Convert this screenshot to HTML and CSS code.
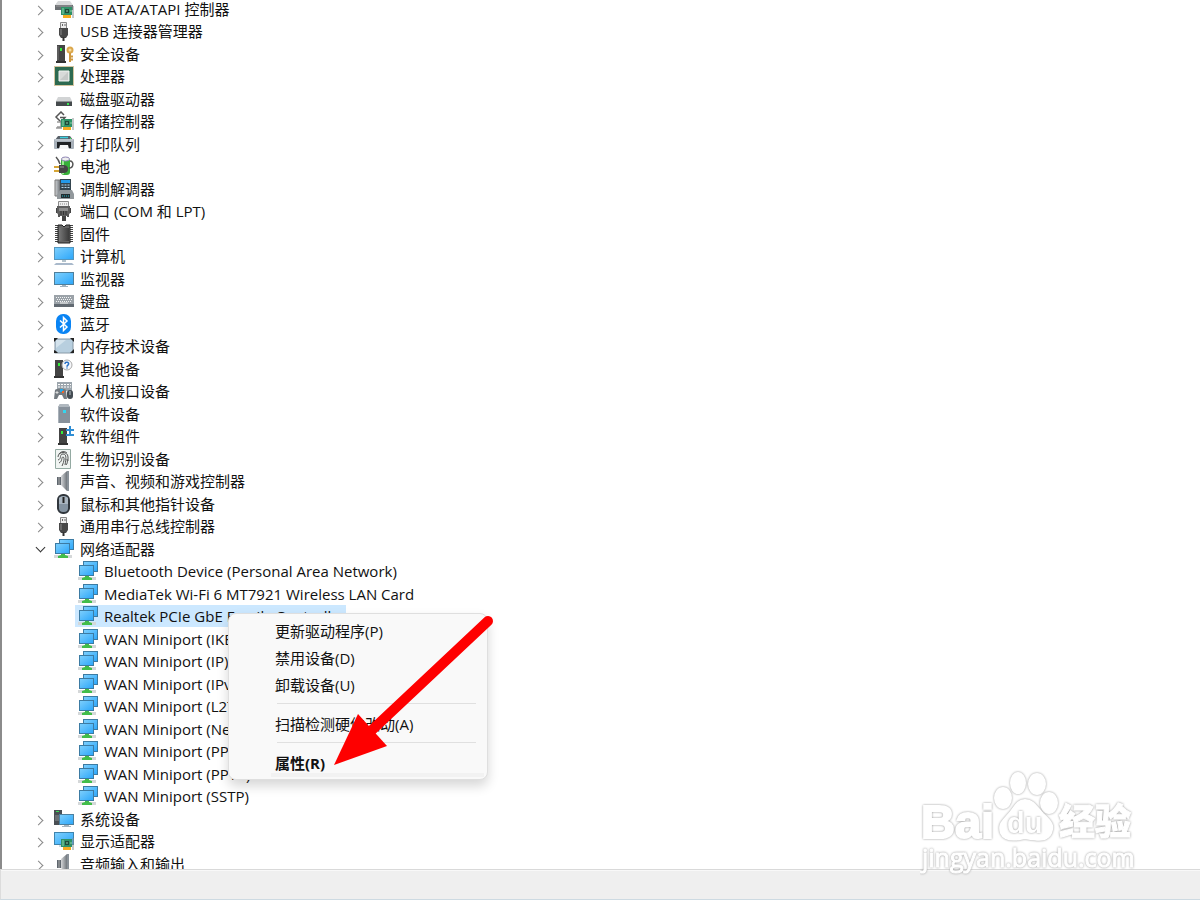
FILE: index.html
```
<!DOCTYPE html>
<html lang="zh-CN">
<head>
  <meta charset="UTF-8">
  <meta name="viewport" content="width=device-width, initial-scale=1.0">
  <title>设备管理器</title>
  <link rel="stylesheet" href="styles.css">
</head>
<body>
  <!-- iconos -->
  <svg class="sprites" aria-hidden="true">
    <defs>
      <linearGradient id="blue" x1="0" y1="0" x2="1" y2="1">
        <stop offset="0" stop-color="#7fd0fd"/><stop offset="1" stop-color="#2ba6fa"/>
      </linearGradient>
      <linearGradient id="grey" x1="0" y1="0" x2="1" y2="0">
        <stop offset="0" stop-color="#d4d6d8"/><stop offset="1" stop-color="#70767c"/>
      </linearGradient>
      <linearGradient id="dark" x1="0" y1="0" x2="1" y2="0">
        <stop offset="0" stop-color="#777"/><stop offset="1" stop-color="#3c3c3c"/>
      </linearGradient>
    </defs>

    <symbol id="card" viewBox="0 0 13 12">
      <path d="M0 1h11v8H0z" fill="#2f9168"/>
      <path d="M4 3h4v4H4z" fill="#1f4a38"/>
      <path d="M1 3h2M1 5h2M9 5h2M5 5h2M1 7h2" stroke="#8ed3a8"/>
      <path d="M2 9h8v3H2z" fill="#f4ab1f"/>
      <path d="M12 0v12" stroke="#8a9294"/>
    </symbol>
    <symbol id="ide" viewBox="0 0 20 20">
      <path d="M4 2h12l3 4H1z" fill="#d7d9da"/>
      <path d="M1 6h18v5H1z" fill="#6a6f72"/>
      <path d="M2 7h16" stroke="#999"/>
      <use href="#card" x="7" y="7" width="13" height="12"/>
    </symbol>
    <symbol id="usb" viewBox="0 0 20 20">
      <path d="M6.500 1.500h6v6h-6z" fill="#ececec" stroke="#888"/>
      <path d="M8 3h1v2H8zM10.500 3h1v2h-1z" fill="#666"/>
      <path d="M5 7h9v7l-2 3H7l-2-3z" fill="#484848"/>
      <path d="M7 8v6" stroke="#8a8a8a"/>
      <path d="M9.500 16v4" stroke="#333" stroke-width="2"/>
    </symbol>
    <symbol id="security" viewBox="0 0 20 20">
      <path d="M3 1h8v16H3z" fill="#444"/>
      <path d="M2 17h10v2H2z" fill="#333"/>
      <path d="M4 2v14" stroke="#777"/>
      <path d="M6 4h2v3H6z" fill="#34ee3c"/>
      <circle cx="16" cy="6" r="2.500" fill="#f6dca0" stroke="#dba74c" stroke-width="2"/>
      <path d="M16 9v9M17 12.500h2M17 15.500h2" fill="none" stroke="#cf983e" stroke-width="2"/>
    </symbol>
    <symbol id="cpu" viewBox="0 0 20 20">
      <rect x="1" y="1" width="18" height="18" fill="#2d6a50"/>
      <rect x=".5" y=".5" width="19" height="19" fill="none" stroke="#fff"/>
      <rect x=".5" y=".5" width="19" height="19" fill="none" stroke="#a98a40" stroke-dasharray="1 1"/>
      <path d="M5 5h10v10H5z" fill="#d8dad9" stroke="#f0f3f1"/>
      <path d="M6 14l8-8v8z" fill="#c6c9c8"/>
    </symbol>
    <symbol id="disk" viewBox="0 0 20 20">
      <path d="M4 8h12l2 4H2z" fill="#d2d4d5"/>
      <path d="M2 12h16v5H2z" fill="#454a4c"/>
      <path d="M2 12.500h16" stroke="#8d9294"/>
      <path d="M13 14h2v2h-2z" fill="#39e653"/>
    </symbol>
    <symbol id="storage" viewBox="0 0 20 20">
      <path d="M10 4L7 1 2 6l5 5 4-4.500H6" fill="none" stroke="#555" stroke-width="1.500"/>
      <path d="M3 11h4v5H3M2 17h6" fill="none" stroke="#999" stroke-width="1.500"/>
      <use href="#card" x="7" y="7" width="13" height="12"/>
    </symbol>
    <symbol id="printer" viewBox="0 0 20 20">
      <path d="M4 2h12l3 4H1z" fill="#59616a"/>
      <path d="M6 3.500h8" stroke="#3ad0e0" stroke-width="1.500"/>
      <rect x="0" y="5" width="20" height="10" rx="1" fill="#a7b0b9"/>
      <path d="M1 6h18" stroke="#cfd6dc"/>
      <path d="M3 8h14v6H3z" fill="#1f2225"/>
      <path d="M6 11h8l1 4H5z" fill="#f4f6f7"/>
      <path d="M16 4h1v1h-1z" fill="#3f5"/>
    </symbol>
    <symbol id="battery" viewBox="0 0 20 20">
      <rect x="7" y="2" width="9" height="17" rx="3" fill="#37b03a"/>
      <path d="M9 5v13" stroke="#9aec90" stroke-width="2"/>
      <ellipse cx="11.500" cy="3" rx="4" ry="2" fill="#eee" stroke="#8e85b5"/>
      <path d="M2 1c2 2 3 4 4 7M15 12c5 0 5-7 1-7" fill="none" stroke="#555" stroke-width="1.500"/>
      <path d="M0 11h5M0 15h5" stroke="#d6a536" stroke-width="2"/>
      <path d="M5 9h4c3 0 5 1 5 4s-2 4-5 4H5z" fill="#454545"/>
      <path d="M6 11h4" stroke="#999"/>
    </symbol>
    <symbol id="modem" viewBox="0 0 20 20">
      <path d="M1 1h5v13l-2 3H1z" fill="url(#grey)" stroke="#777"/>
      <path d="M6 0h11v12H6z" fill="#34454f"/>
      <path d="M7 1h9v3H7z" fill="#2499e8"/>
      <path d="M7.500 6h8M7.500 8.500h8" stroke="#b9d5e6" stroke-dasharray="2 1"/>
      <path d="M3 16l3-5h12l2 4v5H3z" fill="#92989c"/>
      <path d="M7 15h9v4H7z" fill="#252d30"/>
      <path d="M8 17h7" stroke="#28b8c8" stroke-dasharray="1 1"/>
    </symbol>
    <symbol id="port" viewBox="0 0 20 20">
      <path d="M4.500.5h10v5h-10z" fill="#eee" stroke="#8a8a8a"/>
      <path d="M6 3h7" stroke="#888" stroke-dasharray="1 1"/>
      <path d="M3 5h13v7l-2 3H5l-2-3z" fill="#5e5e5e"/>
      <path d="M5 7h9v3H5z" fill="#8d8d8d"/>
      <path d="M7 10v4M9.500 10v4M12 10v4" stroke="#333"/>
      <path d="M2 7h1v5H2zM16 7h1v5h-1zM8 15h4v5H8z" fill="#444"/>
      <path d="M5 13v3M14 13v3" stroke="#555" stroke-width="2"/>
    </symbol>
    <symbol id="firmware" viewBox="0 0 20 20">
      <path d="M2.500 1v18M17.500 1v18" stroke="#444" stroke-width="3" stroke-dasharray="1 1"/>
      <path d="M4 1h4l2 2 2-2h4v18H4z" fill="#666" stroke="#222"/>
      <path d="M5 4h10v13H5z" fill="url(#dark)"/>
    </symbol>
    <symbol id="computer" viewBox="0 0 20 20">
      <rect x=".5" y="1.500" width="19" height="12" fill="url(#blue)" stroke="#5596bd"/>
      <path d="M8 14h4v2H8z" fill="#b4c3cc"/>
      <path d="M2 17h16l2 2H0z" fill="#a9b9cb"/>
    </symbol>
    <symbol id="monitor" viewBox="0 0 20 20">
      <rect x=".5" y="3.500" width="19" height="12" fill="url(#blue)" stroke="#4f7f9b"/>
      <path d="M8 16h4v1h2v1H6v-1h2z" fill="#9fb1bd"/>
    </symbol>
    <symbol id="keyboard" viewBox="0 0 20 20">
      <path d="M0 4h20v9H0z" fill="#9ba2a8"/>
      <path d="M0 13h20v3H0z" fill="#626a72"/>
      <path d="M2 6.500h16M3 8.500h15M2 10.500h16" stroke="#f2f4f5" stroke-dasharray="1 1"/>
      <path d="M6 12h8" stroke="#eee"/>
    </symbol>
    <symbol id="bluetooth" viewBox="0 0 20 20">
      <rect x="2" y="0" width="15" height="20" rx="7" fill="#0a84f4"/>
      <path d="M6 6.500l7 6.500-3.500 3.500v-13L13 7l-7 6.500" fill="none" stroke="#fff" stroke-width="1.500"/>
    </symbol>
    <symbol id="memory" viewBox="0 0 20 20">
      <rect x="1" y="3" width="18" height="14" fill="#b8cfdf" stroke="#899aa7"/>
      <path d="M2 12L12 4H2z" fill="#d4e3ed"/>
      <path d="M0 6V2h4L2 4zM16 2h4v4l-2-2zM0 14v3h4l-2-2zM16 17h4v-4l-2 2z" fill="#222"/>
    </symbol>
    <symbol id="other" viewBox="0 0 20 20">
      <path d="M1 1h8v16H1z" fill="#444"/>
      <path d="M0 17h10v2H0z" fill="#333"/>
      <path d="M4 4h2v3H4z" fill="#34ee3c"/>
      <circle cx="13" cy="6" r="5" fill="#f6f7fa" stroke="#aaa"/>
      <path d="M11 5c0-3 4.500-2 3.500.3-.5 1-1.500 1-1.500 2.500M13 8.500v1" fill="none" stroke="#276fc5" stroke-width="1.500"/>
    </symbol>
    <symbol id="hid" viewBox="0 0 20 20">
      <path d="M3 1h15v9H3z" fill="#9da6ad"/>
      <path d="M4 3.500h13M4 6h13" stroke="#fff" stroke-dasharray="2 1"/>
      <path d="M1 9c2-2 9-2 11 0l1 9h-3l-2-4H5l-2 4H0z" fill="#737a80"/>
      <path d="M3 10v3M1.500 11.500h3" stroke="#ddd"/>
      <path d="M6 8h3v3H6z" fill="#25a8e8"/>
      <path d="M8 10h2v2H8z" fill="#f1652a"/>
      <rect x="13" y="9" width="6" height="9" rx="3" fill="#444c53"/>
      <path d="M16 10v4" stroke="#b5bfc5"/>
    </symbol>
    <symbol id="software" viewBox="0 0 20 20">
      <path d="M4 3l2-3h8l2 3v16H4z" fill="#87919b"/>
      <path d="M4 3l2-3h8l2 3z" fill="#b0b8bf"/>
      <path d="M4.500 3v16" stroke="#a9b1b9"/>
      <path d="M9 6h3v3H9z" fill="#35d5ee"/>
    </symbol>
    <symbol id="component" viewBox="0 0 20 20">
      <path d="M5 2h8v15H5z" fill="#444"/>
      <path d="M4 17h10v2H4z" fill="#333"/>
      <path d="M7 5h2v3H7z" fill="#34ee3c"/>
      <path d="M12 4h8M16 0v9M12 9h8" stroke="#2f8ed5" stroke-width="2"/>
    </symbol>
    <symbol id="finger" viewBox="0 0 20 20">
      <path d="M1.500.5h15v19h-15z" fill="#f0f4f2" stroke="#94aaa2"/>
      <path d="M4 8c0-6 10-6 10 0v4M4 11c4-1 1-6 5-6s3 5 2 11M5 14c4-2 2-6 4-6s1 5-1 9M13 10c1 3 0 5-1 6M5 5c2-3 6-3 8-1" fill="none" stroke="#555"/>
    </symbol>
    <symbol id="sound" viewBox="0 0 20 20">
      <path d="M3 6h4v8H3z" fill="#5e666e"/>
      <path d="M7 5l6-5v20l-6-6z" fill="url(#grey)"/>
      <path d="M13 0h2v20h-2z" fill="#8a9299"/>
      <path d="M5 6v8" stroke="#aaa"/>
    </symbol>
    <symbol id="mouse" viewBox="0 0 20 20">
      <rect x="4" y="1" width="11" height="18" rx="5" fill="#8493a1" stroke="#30363c" stroke-width="2"/>
      <path d="M5 4c2-2 7-2 9 0v6H5z" fill="#a9b5c0"/>
      <path d="M9.500 3v6" stroke="#222" stroke-width="2"/>
    </symbol>
    <symbol id="network" viewBox="0 0 20 20">
      <rect x="5.500" y=".5" width="14" height="10" fill="url(#blue)" stroke="#3c7ba3"/>
      <rect x="1.500" y="4.500" width="14" height="10" fill="url(#blue)" stroke="#3c7ba3"/>
      <path d="M0 16h18v3H0z" fill="#d5d8d9"/>
      <path d="M7 15h4v1l3 1v2H4v-2l3-1z" fill="#42bd4a"/>
    </symbol>
    <symbol id="system" viewBox="0 0 20 20">
      <path d="M0 1h8v15H0z" fill="#4a4f54"/>
      <path d="M1 7h5M1 9h5M1 11h5" stroke="#8b9196"/>
      <path d="M2 2h3v1H2z" fill="#3bdc58"/>
      <rect x="5.500" y="5.500" width="14" height="10" fill="url(#blue)" stroke="#4c809f"/>
      <path d="M10 16h5v1h2v1H8v-1h2z" fill="#a5b4be"/>
    </symbol>
    <symbol id="display" viewBox="0 0 20 20">
      <rect x=".5" y="1.500" width="19" height="12" fill="url(#blue)" stroke="#3f84ad"/>
      <path d="M5 15h5" stroke="#a5b4be"/>
      <use href="#card" x="7" y="7" width="13" height="12"/>
    </symbol>
  </svg>

  <main class="window">
    <ul class="tree">
      <li><button class="toggle" aria-label="展开"></button><svg class="icon"><use href="#ide"/></svg><span>IDE ATA/ATAPI 控制器</span></li>
      <li><button class="toggle" aria-label="展开"></button><svg class="icon"><use href="#usb"/></svg><span>USB 连接器管理器</span></li>
      <li><button class="toggle" aria-label="展开"></button><svg class="icon"><use href="#security"/></svg><span>安全设备</span></li>
      <li><button class="toggle" aria-label="展开"></button><svg class="icon"><use href="#cpu"/></svg><span>处理器</span></li>
      <li><button class="toggle" aria-label="展开"></button><svg class="icon"><use href="#disk"/></svg><span>磁盘驱动器</span></li>
      <li><button class="toggle" aria-label="展开"></button><svg class="icon"><use href="#storage"/></svg><span>存储控制器</span></li>
      <li><button class="toggle" aria-label="展开"></button><svg class="icon"><use href="#printer"/></svg><span>打印队列</span></li>
      <li><button class="toggle" aria-label="展开"></button><svg class="icon"><use href="#battery"/></svg><span>电池</span></li>
      <li><button class="toggle" aria-label="展开"></button><svg class="icon"><use href="#modem"/></svg><span>调制解调器</span></li>
      <li><button class="toggle" aria-label="展开"></button><svg class="icon"><use href="#port"/></svg><span>端口 (COM 和 LPT)</span></li>
      <li><button class="toggle" aria-label="展开"></button><svg class="icon"><use href="#firmware"/></svg><span>固件</span></li>
      <li><button class="toggle" aria-label="展开"></button><svg class="icon"><use href="#computer"/></svg><span>计算机</span></li>
      <li><button class="toggle" aria-label="展开"></button><svg class="icon"><use href="#monitor"/></svg><span>监视器</span></li>
      <li><button class="toggle" aria-label="展开"></button><svg class="icon"><use href="#keyboard"/></svg><span>键盘</span></li>
      <li><button class="toggle" aria-label="展开"></button><svg class="icon"><use href="#bluetooth"/></svg><span>蓝牙</span></li>
      <li><button class="toggle" aria-label="展开"></button><svg class="icon"><use href="#memory"/></svg><span>内存技术设备</span></li>
      <li><button class="toggle" aria-label="展开"></button><svg class="icon"><use href="#other"/></svg><span>其他设备</span></li>
      <li><button class="toggle" aria-label="展开"></button><svg class="icon"><use href="#hid"/></svg><span>人机接口设备</span></li>
      <li><button class="toggle" aria-label="展开"></button><svg class="icon"><use href="#software"/></svg><span>软件设备</span></li>
      <li><button class="toggle" aria-label="展开"></button><svg class="icon"><use href="#component"/></svg><span>软件组件</span></li>
      <li><button class="toggle" aria-label="展开"></button><svg class="icon"><use href="#finger"/></svg><span>生物识别设备</span></li>
      <li><button class="toggle" aria-label="展开"></button><svg class="icon"><use href="#sound"/></svg><span>声音、视频和游戏控制器</span></li>
      <li><button class="toggle" aria-label="展开"></button><svg class="icon"><use href="#mouse"/></svg><span>鼠标和其他指针设备</span></li>
      <li><button class="toggle" aria-label="展开"></button><svg class="icon"><use href="#usb"/></svg><span>通用串行总线控制器</span></li>
      <li><button class="toggle open" aria-label="折叠"></button><svg class="icon"><use href="#network"/></svg><span>网络适配器</span></li>
      <li class="child"><svg class="icon"><use href="#network"/></svg><span>Bluetooth Device (Personal Area Network)</span></li>
      <li class="child"><svg class="icon"><use href="#network"/></svg><span>MediaTek Wi-Fi 6 MT7921 Wireless LAN Card</span></li>
      <li class="child selected"><svg class="icon"><use href="#network"/></svg><span>Realtek PCIe GbE Family Controller</span></li>
      <li class="child"><svg class="icon"><use href="#network"/></svg><span>WAN Miniport (IKEv2)</span></li>
      <li class="child"><svg class="icon"><use href="#network"/></svg><span>WAN Miniport (IP)</span></li>
      <li class="child"><svg class="icon"><use href="#network"/></svg><span>WAN Miniport (IPv6)</span></li>
      <li class="child"><svg class="icon"><use href="#network"/></svg><span>WAN Miniport (L2TP)</span></li>
      <li class="child"><svg class="icon"><use href="#network"/></svg><span>WAN Miniport (Network Monitor)</span></li>
      <li class="child"><svg class="icon"><use href="#network"/></svg><span>WAN Miniport (PPPOE)</span></li>
      <li class="child"><svg class="icon"><use href="#network"/></svg><span>WAN Miniport (PPTP)</span></li>
      <li class="child"><svg class="icon"><use href="#network"/></svg><span>WAN Miniport (SSTP)</span></li>
      <li><button class="toggle" aria-label="展开"></button><svg class="icon"><use href="#system"/></svg><span>系统设备</span></li>
      <li><button class="toggle" aria-label="展开"></button><svg class="icon"><use href="#display"/></svg><span>显示适配器</span></li>
      <li><button class="toggle" aria-label="展开"></button><svg class="icon"><use href="#sound"/></svg><span>音频输入和输出</span></li>
    </ul>
  </main>

  <footer class="statusbar"></footer>

  <div class="menu" role="menu">
    <button role="menuitem">更新驱动程序(P)</button>
    <button role="menuitem">禁用设备(D)</button>
    <button role="menuitem">卸载设备(U)</button>
    <hr>
    <button role="menuitem">扫描检测硬件改动(A)</button>
    <hr>
    <button role="menuitem" class="default">属性(R)</button>
  </div>

  <svg class="arrow" viewBox="0 0 170 160" aria-hidden="true">
    <path d="M158 11L42 120" stroke="#fe0000" stroke-width="10" stroke-linecap="round"/>
    <path d="M4 155L28 104 57 136z" fill="#fe0000"/>
  </svg>

  <svg class="watermark" viewBox="0 0 230 120">
    <ellipse cx="83" cy="38" rx="8" ry="10"/>
    <ellipse cx="98" cy="23" rx="7" ry="10"/>
    <ellipse cx="117" cy="24" rx="8" ry="10"/>
    <ellipse cx="129" cy="43" rx="8" ry="10"/>
    <path d="M105 40c9 0 12 8 18 14 9 8 11 12 8 19-4 9-14 7-26 5-13 3-21 2-24-5-3-9 2-12 8-19 6-7 8-14 16-14z"/>
    <text class="logo" x="1" y="78">Bai</text>
    <text class="du" x="87" y="73">du</text>
    <text class="logo-cn" x="139" y="75">经验</text>
    <text class="site" x="2" y="107">jingyan.baidu.com</text>
  </svg>
</body>
</html>
```
FILE: styles.css
```
* {
  box-sizing: border-box;
}

body {
  margin: 0;
  height: 100vh;
  display: flex;
  flex-direction: column;
  position: relative;
  overflow: hidden;
  background-color: #fff;
  color: #111;
  font-family: "Open Sans", "Noto Sans CJK SC", sans-serif;
  font-size: 15px;
}

.sprites {
  position: absolute;
  width: 0;
  height: 0;
}

.window {
  flex: 1;
  min-height: 0;
  overflow: hidden;
  border-left: 2px solid #8b8b8b;
}

.tree {
  list-style: none;
  margin: -3px 0 0;
  padding: 0 0 0 30px;
  display: grid;
  grid-auto-rows: 23px 22px;
  justify-items: start;
}

.tree li {
  display: flex;
  align-items: center;
  line-height: 22px;
  white-space: nowrap;
}

.tree .child {
  margin-left: 43px;
  padding: 0 3px;
}

.tree .selected {
  padding-right: 0;
  background-color: #cce8ff;
}

.icon {
  width: 20px;
  height: 20px;
  margin-right: 6px;
  flex: none;
}

.toggle {
  width: 16px;
  height: 20px;
  margin-right: 6px;
  padding: 0;
  border: none;
  background: none;
  display: flex;
  align-items: center;
  cursor: pointer;
}

.toggle::before {
  content: "";
  width: 6px;
  height: 6px;
  margin: 3px 0 0 3px;
  border-top: 1px solid #888;
  border-right: 1px solid #888;
  transform: rotate(45deg);
}

.toggle.open::before {
  margin: 0 0 2px 5px;
  border-color: #333;
  transform: rotate(135deg);
}

.statusbar {
  height: 31px;
  background-color: #efefef;
  border-top: 1px solid #d9d9d9;
  border-left: 1px solid #dcdcdc;
  border-bottom: 1px solid #cddae2;
  box-shadow: inset 0 1px #f8f8f8;
}

/* menú contextual */
.menu {
  position: absolute;
  left: 228px;
  top: 613px;
  width: 260px;
  padding: 4px 3px 2px;
  background-color: #f9f9f9;
  border: 1px solid #dfdfdf;
  border-radius: 8px;
  box-shadow: 0 6px 12px rgba(0, 0, 0, 0.16);
}

.menu button {
  display: block;
  width: 100%;
  height: 27px;
  padding: 0 0 0 43px;
  border: none;
  background: none;
  color: #111;
  font: inherit;
  line-height: 27px;
  text-align: left;
}

.menu hr {
  height: 1px;
  margin: 4px 8px 7px 45px;
  border: none;
  background-color: #e0e0e0;
}

.menu .default {
  font-weight: bold;
  background: linear-gradient(#f2f2f2, #f2f2f2) 39px 100% / 100% 4px no-repeat;
}

.arrow {
  position: absolute;
  left: 330px;
  top: 610px;
  width: 170px;
  height: 160px;
}

/* marca de agua */
.watermark {
  position: absolute;
  right: 50px;
  bottom: 20px;
  width: 230px;
  height: 120px;
}

.watermark > * {
  fill: #fff;
  stroke: #fff;
  stroke-width: 2px;
  filter: drop-shadow(0 0 1px #999);
}

.watermark text {
  font-weight: bold;
}

.watermark .logo {
  font-family: "Liberation Sans", sans-serif;
  font-size: 47px;
}

.watermark .du {
  font-family: "Liberation Sans", sans-serif;
  font-size: 29px;
  stroke-width: 0;
}

.watermark .logo-cn {
  font-family: "Noto Sans CJK SC", sans-serif;
  font-size: 36px;
  font-weight: 900;
  stroke-width: 1px;
}

.watermark .site {
  font-size: 25px;
  font-weight: 400;
  stroke-width: 1px;
}
```
